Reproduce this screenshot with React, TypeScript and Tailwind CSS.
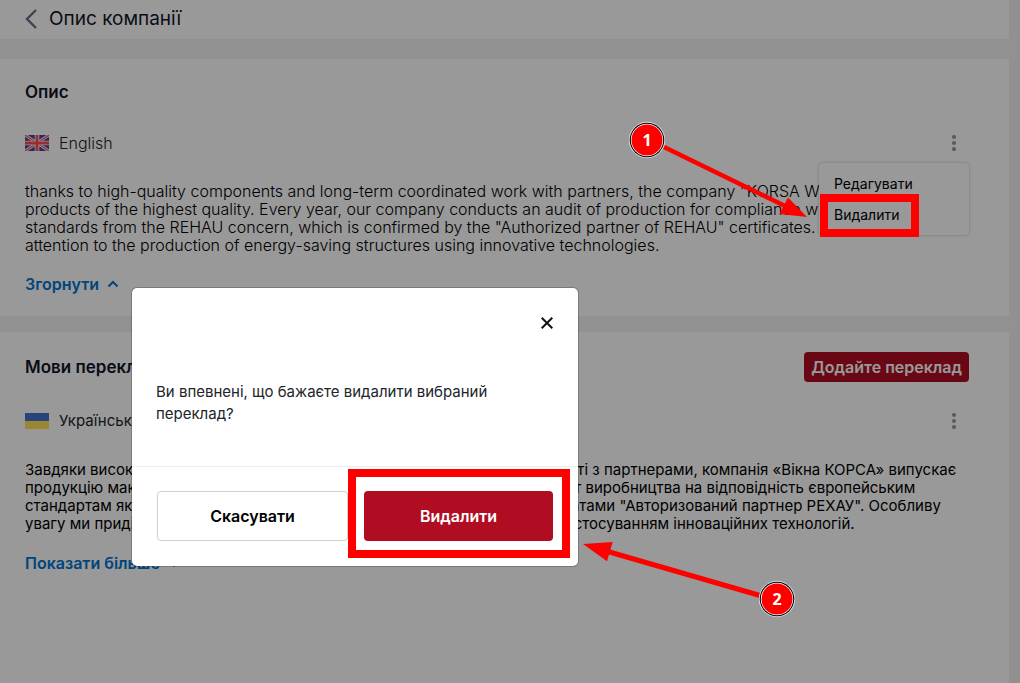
import React from "react";

const UkFlag = () => (
  <svg width="24" height="16" viewBox="0 0 24 16" aria-hidden="true">
    <rect width="24" height="16" fill="#41479b" />
    <path d="M0 0L24 16M24 0L0 16" stroke="#f5f5f5" strokeWidth="3" />
    <path d="M0 0L24 16M24 0L0 16" stroke="#ff4b55" strokeWidth="1.2" />
    <path d="M12 0V16M0 8H24" stroke="#f5f5f5" strokeWidth="4.6" />
    <path d="M12 0V16M0 8H24" stroke="#ff4b55" strokeWidth="2.8" />
  </svg>
);

const UaFlag = () => (
  <svg width="24" height="16" viewBox="0 0 24 16" aria-hidden="true">
    <rect width="24" height="8" fill="#4173cd" />
    <rect y="8" width="24" height="8" fill="#ffe15a" />
  </svg>
);

const DotsButton = () => (
  <button type="button" aria-label="Меню" className="flex w-[30px] justify-center">
    <svg width="6" height="16" viewBox="0 0 6 16" fill="#9a9a9a" aria-hidden="true">
      <circle cx="3" cy="2" r="2.1" />
      <circle cx="3" cy="8" r="2.1" />
      <circle cx="3" cy="14" r="2.1" />
    </svg>
  </button>
);

const Chevron = ({ d }: { d: string }) => (
  <svg width="12" height="8" viewBox="0 0 12 8" fill="none" stroke="currentColor" strokeWidth="2" aria-hidden="true">
    <path d={d} />
  </svg>
);

const Annotations = () => (
  <svg className="pointer-events-none absolute top-0 left-0 z-20" width="1020" height="683" viewBox="0 0 1020 683">
    <rect x="824" y="198" width="91" height="35" fill="none" stroke="#f00" strokeWidth="8" />
    <rect x="352" y="473" width="214" height="81" fill="none" stroke="#f00" strokeWidth="8" />
    <path d="M664 147L787 207" stroke="#f00" strokeWidth="4.5" />
    <path d="M807 217L788 197.5L779.5 214Z" fill="#f00" />
    <path d="M760 595.5L606 551" stroke="#f00" strokeWidth="5" />
    <path d="M583 544L612.7 542L607 561.3Z" fill="#f00" />
    {[
      { n: "1", x: 647, y: 140 },
      { n: "2", x: 777, y: 599 },
    ].map((m) => (
      <g key={m.n}>
        <circle cx={m.x} cy={m.y} r="18.2" fill="#ddd" />
        <circle cx={m.x} cy={m.y} r="17.3" fill="#000" />
        <circle cx={m.x} cy={m.y} r="16.2" fill="#fff" />
        <circle cx={m.x} cy={m.y} r="15.5" fill="#f00" />
        <text x={m.x} y={m.y + 6} textAnchor="middle" fill="#fff" className="font-['Noto_Sans',sans-serif] text-[16px] font-bold">
          {m.n}
        </text>
      </g>
    ))}
  </svg>
);

export default function App() {
  return (
    <div className="relative flex min-h-screen flex-col overflow-hidden bg-[#f2f2f2] pr-[11px] font-['Inter',sans-serif] text-[15px] text-black">
      <header className="flex h-[39px] items-center gap-3 bg-white pb-[2px] pl-[25px]">
        <a href="#back" aria-label="Назад">
          <svg width="12" height="20" viewBox="0 0 12 20" fill="none" stroke="#6b7089" strokeWidth="2.4" aria-hidden="true">
            <path d="M11 1L2 10L11 19" />
          </svg>
        </a>
        <h1 className="text-[19px] leading-6 text-[#0f1629]">Опис компанії</h1>
      </header>

      <main className="mt-5 flex flex-1 flex-col gap-4">
        <section className="h-[257px] bg-white pt-[21px] pr-10 pl-[25px]">
          <h2 className="text-[17px] leading-6 font-semibold text-[#0f1629]">Опис</h2>
          <div className="relative mt-[27px] flex h-6 items-center justify-between">
            <div className="flex items-center gap-[10px] text-[16px] font-light text-[#212529]">
              <UkFlag />
              English
            </div>
            <DotsButton />
            <div className="absolute top-8 right-0 flex h-[72px] w-[150px] flex-col rounded-sm bg-white px-[15px] pt-[5px] text-[14px] shadow-[0_0_3px_rgba(0,0,0,0.25)]">
              <button type="button" className="h-[31px] text-left">Редагувати</button>
              <button type="button" className="h-[31px] text-left">Видалити</button>
            </div>
          </div>
          <p className="mt-[27px] text-[16px] leading-[18px] font-light whitespace-nowrap">
            thanks to high-quality components and long-term coordinated work with partners, the company "KORSA Wind
            <br />
            products of the highest quality. Every year, our company conducts an audit of production for compliance with
            <br />
            standards from the REHAU concern, which is confirmed by the "Authorized partner of REHAU" certificates. We pay sp
            <br />
            attention to the production of energy-saving structures using innovative technologies.
          </p>
          <button type="button" className="mt-[18px] flex h-6 items-center gap-2 text-[16px] font-semibold text-[#0073cf]">
            Згорнути
            <Chevron d="M1.5 6.5L6 2L10.5 6.5" />
          </button>
        </section>

        <section className="flex-1 bg-white pt-5 pr-10 pl-[25px]">
          <div className="flex items-center justify-between">
            <h2 className="text-[17px] leading-6 font-semibold text-[#0f1629]">Мови перекладу</h2>
            <button type="button" className="h-[30px] rounded-sm bg-[#b00d22] px-[7px] text-[16px] font-semibold text-white">
              Додайте переклад
            </button>
          </div>
          <div className="mt-[27px] flex h-6 items-center justify-between">
            <div className="flex items-center gap-[10px] text-[#212529]">
              <UaFlag />
              Українська
            </div>
            <DotsButton />
          </div>
          <p className="mt-7 leading-[18px] whitespace-nowrap">
            Завдяки високоякісним комплектуючим і довготривалій злагодженій роботі з партнерами, компанія «Вікна КОРСА» випускає
            <br />
            продукцію максимально високої якості. Щороку компанія проводить аудит виробництва на відповідність європейським
            <br />
            стандартам якості від концерну РЕХАУ, що все підтверджується сертифікатами "Авторизований партнер РЕХАУ". Особливу
            <br />
            увагу ми приділяємо виробництву енергозберігаючих конструкцій та із застосуванням інноваційних технологій.
          </p>
          <button type="button" className="mt-[18px] flex h-6 items-center gap-2 text-[16px] font-semibold text-[#0073cf]">
            Показати більше
            <Chevron d="M1.5 2L6 6.5L10.5 2" />
          </button>
        </section>
      </main>

      <div className="absolute inset-0 z-10 bg-black/40">
        <div role="dialog" aria-modal="true" className="absolute top-[287px] left-[131px] w-[448px] rounded-md border border-black/20 bg-white bg-clip-padding">
          <div className="flex justify-end pt-[26px] pr-[22px]">
            <button type="button" aria-label="Закрити" className="p-[3px]">
              <svg width="12" height="12" viewBox="0 0 12 12" stroke="#111" strokeWidth="2" aria-hidden="true">
                <path d="M0.7 0.7L11.3 11.3M11.3 0.7L0.7 11.3" />
              </svg>
            </button>
          </div>
          <p className="mt-[49px] px-6 pb-[41px] leading-[22px] text-[#212529]">
            Ви впевнені, що бажаєте видалити вибраний
            <br />
            переклад?
          </p>
          <div className="flex gap-4 border-t border-[#eee] px-[25px] pt-6 pb-[25px] text-[16px] font-semibold">
            <button type="button" className="h-[50px] flex-1 rounded-sm border border-[#d0d0d0] text-black">Скасувати</button>
            <button type="button" className="h-[50px] flex-1 rounded-sm bg-[#b00d22] text-white">Видалити</button>
          </div>
        </div>
      </div>

      <Annotations />
    </div>
  );
}
